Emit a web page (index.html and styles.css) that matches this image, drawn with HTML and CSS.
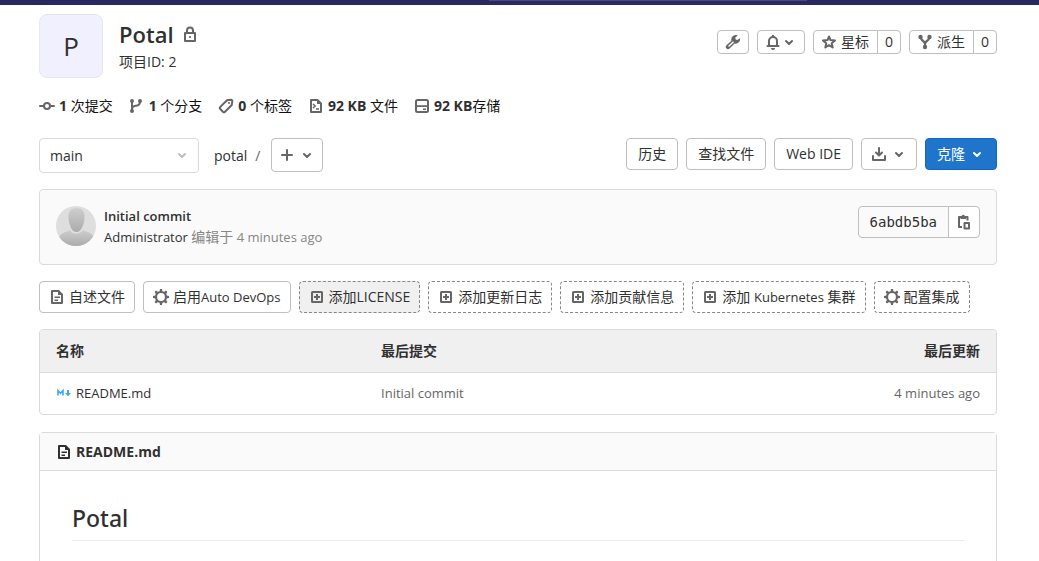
FILE: index.html
```html
<!DOCTYPE html>
<html lang="zh-CN">
<head>
    <meta charset="UTF-8">
    <meta name="viewport" content="width=device-width, initial-scale=1.0">
    <title>Potal</title>
    <link rel="stylesheet" href="styles.css">
</head>
<body>
    <!-- icon sprite -->
    <svg class="sprite" aria-hidden="true">
        <symbol id="lock" viewBox="0 0 16 16"><path d="M5 7V4.500a3 3 0 0 1 6 0V7M3 7h10v8H3z" fill="none" stroke="currentColor" stroke-width="2" stroke-linejoin="round"/><circle cx="8" cy="11" r="1.100"/></symbol>
        <symbol id="commit" viewBox="0 0 16 16"><path d="M1 8h4M11 8h4" stroke="currentColor" stroke-width="2" stroke-linecap="round"/><circle cx="8" cy="8" r="3" fill="none" stroke="currentColor" stroke-width="2"/></symbol>
        <symbol id="branch" viewBox="0 0 16 16"><path d="M3 3v10M3 11c0-2.500 1.500-3 4-3.300S11 6.500 11 4" fill="none" stroke="currentColor" stroke-width="2"/><circle cx="3" cy="3" r="2"/><circle cx="3" cy="13" r="2"/><circle cx="11" cy="3" r="2"/></symbol>
        <symbol id="label" viewBox="0 0 16 16"><path d="M9 2.300l4.200-.5a1 1 0 0 1 1.100 1.100L13.800 7 7 13.700a1.500 1.500 0 0 1-2.100 0L2.300 11a1.500 1.500 0 0 1 0-2.100z" fill="none" stroke="currentColor" stroke-width="2" stroke-linejoin="round"/><circle cx="11" cy="5" r="1"/></symbol>
        <symbol id="code-file" viewBox="0 0 16 16"><path d="M3 2h6.500L13 5.500V14H3z" fill="none" stroke="currentColor" stroke-width="2" stroke-linejoin="round"/><path d="M5 6l2.200 2L5 10" fill="none" stroke="currentColor" stroke-width="1.500"/><path d="M8 10.300h3v1.500H8zM9 2v4h4z"/></symbol>
        <symbol id="disk" viewBox="0 0 16 16"><rect x="2" y="2" width="12" height="12" rx="1.500" fill="none" stroke="currentColor" stroke-width="2"/><path d="M2 7.200h12v1.800H2zM9 10.500h3V12H9z"/></symbol>
        <symbol id="wrench" viewBox="0 0 16 16"><path d="M15 4.200l-2.700 1.900-1.800-.8-.2-1.900L12.900 1.500A4.600 4.600 0 0 0 6.400 6.700L1.500 11.300a2.200 2.200 0 0 0 3.100 3.200L9.600 9.600A4.600 4.600 0 0 0 15 4.200zM4.500 12.600a.7.700 0 1 1-1-1L8 7.200l1 1z" fill-rule="evenodd"/></symbol>
        <symbol id="bell" viewBox="0 0 16 16"><path d="M2.500 12h11M4 12V7a4 4 0 0 1 8 0v5" fill="none" stroke="currentColor" stroke-width="2" stroke-linecap="round"/><path d="M7 1h2v2H7zM6 14h4a2 2 0 0 1-4 0z"/></symbol>
        <symbol id="star" viewBox="0 0 16 16"><path d="M8 2.500l1.500 3.600 4.500.4-3.300 2.800 1 4.200L8 11.200l-3.700 2.300 1-4.200L2 6.500l4.500-.4z" fill="none" stroke="currentColor" stroke-width="2" stroke-linejoin="round"/></symbol>
        <symbol id="fork" viewBox="0 0 16 16"><path d="M4 3v1c0 3 4 2.500 4 6 0-3.500 4-3 4-6V3M8 8v5" fill="none" stroke="currentColor" stroke-width="2.200"/><circle cx="3.500" cy="3" r="2.200"/><circle cx="12.500" cy="3" r="2.200"/><circle cx="8" cy="13" r="2.200"/></symbol>
        <symbol id="chevron" viewBox="0 0 16 16"><path d="M5 7l3 3 3-3" fill="none" stroke="currentColor" stroke-width="2" stroke-linecap="round" stroke-linejoin="round"/></symbol>
        <symbol id="plus" viewBox="0 0 16 16"><path d="M8 3v10M3 8h10" stroke="currentColor" stroke-width="2" stroke-linecap="round"/></symbol>
        <symbol id="download" viewBox="0 0 16 16"><path d="M8 2v7M5 6.500l3 3 3-3M2 10v4h12v-4" fill="none" stroke="currentColor" stroke-width="2" stroke-linecap="round" stroke-linejoin="round"/></symbol>
        <symbol id="copy" viewBox="0 0 16 16"><path d="M6 13H3V3h8.500v3.500" fill="none" stroke="currentColor" stroke-width="2" stroke-linejoin="round"/><path d="M4.500 5V2h1.200a1.600 1.600 0 0 1 3.100 0H10v3z"/><rect x="8.500" y="9" width="4.500" height="5.500" fill="none" stroke="currentColor" stroke-width="2" stroke-linejoin="round"/></symbol>
        <symbol id="doc" viewBox="0 0 16 16"><path d="M3 2h6.500L13 5.500V14H3z" fill="none" stroke="currentColor" stroke-width="2" stroke-linejoin="round"/><path d="M5.500 7.500H11V9H5.500zM5.500 10.500H9V12H5.500zM9 2v4h4z"/></symbol>
        <symbol id="gear" viewBox="0 0 16 16"><circle cx="8" cy="8" r="5" fill="none" stroke="currentColor" stroke-width="2.200"/><path d="M6.500 3L7 0h2l.5 3zM6.500 13l.5 3h2l.5-3zM3 6.500L0 7v2l3 .5zM13 6.500l3 .5v2l-3 .5zM3.200 5.400L1.600 3l1.400-1.400 2.400 1.600zM12.800 5.400L14.400 3 13 1.600l-2.400 1.600zM3.200 10.600L1.600 13 3 14.400l2.400-1.600zM12.800 10.600l1.600 2.400-1.400 1.400-2.400-1.600z"/></symbol>
        <symbol id="plus-square" viewBox="0 0 16 16"><rect x="3" y="3" width="10" height="10" rx=".5" fill="none" stroke="currentColor" stroke-width="2"/><path d="M7 5h2v2h2v2H9v2H7V9H5V7h2z"/></symbol>
        <symbol id="markdown" viewBox="0 0 16 16"><path d="M2 10.500v-5l2.500 2.800L7 5.500v5" fill="none" stroke="currentColor" stroke-width="1.600"/><path d="M11 5h2v3h2l-3 3.300L9 8h2z"/></symbol>
    </svg>

    <header class="navbar">
        <div class="navbar-search"></div>
    </header>

    <main class="content">
        <section class="project-header">
            <div class="project-avatar">P</div>
            <div class="project-title">
                <h1>Potal <svg class="icon"><use href="#lock"/></svg></h1>
                <p>项目ID: 2</p>
            </div>
            <div class="project-actions">
                <button class="btn btn-small" type="button" aria-label="管理"><svg class="icon"><use href="#wrench"/></svg></button>
                <button class="btn btn-small btn-bell" type="button" aria-label="通知"><svg class="icon"><use href="#bell"/></svg><svg class="icon"><use href="#chevron"/></svg></button>
                <div class="btn-group">
                    <button class="btn btn-small" type="button"><svg class="icon"><use href="#star"/></svg>星标</button>
                    <a class="btn btn-small" href="#">0</a>
                </div>
                <div class="btn-group">
                    <button class="btn btn-small" type="button"><svg class="icon"><use href="#fork"/></svg>派生</button>
                    <a class="btn btn-small" href="#">0</a>
                </div>
            </div>
        </section>

        <nav class="stats">
            <a href="#"><svg class="icon"><use href="#commit"/></svg><span><strong>1</strong> 次提交</span></a>
            <a href="#"><svg class="icon"><use href="#branch"/></svg><span><strong>1</strong> 个分支</span></a>
            <a href="#"><svg class="icon"><use href="#label"/></svg><span><strong>0</strong> 个标签</span></a>
            <a href="#"><svg class="icon"><use href="#code-file"/></svg><span><strong>92 KB</strong> 文件</span></a>
            <a href="#"><svg class="icon"><use href="#disk"/></svg><span><strong>92 KB</strong>存储</span></a>
        </nav>

        <section class="tree-controls">
            <div class="ref-select">
                <select aria-label="分支">
                    <option>main</option>
                </select>
                <svg class="icon"><use href="#chevron"/></svg>
            </div>
            <div class="breadcrumb"><a href="#">potal</a><span>/</span></div>
            <button class="btn btn-add" type="button" aria-label="添加"><svg class="icon"><use href="#plus"/></svg><svg class="icon"><use href="#chevron"/></svg></button>
            <div class="tree-actions">
                <a class="btn" href="#">历史</a>
                <a class="btn" href="#">查找文件</a>
                <a class="btn" href="#">Web IDE</a>
                <button class="btn btn-download" type="button" aria-label="下载"><svg class="icon"><use href="#download"/></svg><svg class="icon"><use href="#chevron"/></svg></button>
                <button class="btn btn-blue" type="button">克隆<svg class="icon"><use href="#chevron"/></svg></button>
            </div>
        </section>

        <section class="last-commit">
            <svg class="user-avatar" viewBox="0 0 40 40" aria-hidden="true">
                <defs>
                    <linearGradient id="person" x1="0" y1="0" x2="0" y2="1"><stop offset="0" stop-color="#cecece"/><stop offset="1" stop-color="#ababab"/></linearGradient>
                    <clipPath id="round"><circle cx="20" cy="20" r="20"/></clipPath>
                </defs>
                <g clip-path="url(#round)">
                    <path d="M0 0h40v40H0z" fill="#dedede"/>
                    <path d="M3 31c2-4 7-5 11-7 2 5 10 5 13 0 4 2 9 3 11 7v9H3z" fill="url(#person)"/>
                    <path d="M20.500 2c6 0 8.500 4 8 10-.4 6-3 14-8 14s-7.600-8-8-14c-.5-6 2-10 8-10z" fill="url(#person)"/>
                </g>
            </svg>
            <div class="commit-info">
                <a class="commit-title" href="#">Initial commit</a>
                <p><a href="#">Administrator</a> <span>编辑于</span> 4 minutes ago</p>
            </div>
            <div class="btn-group commit-sha">
                <span class="btn sha">6abdb5ba</span>
                <button class="btn" type="button" aria-label="复制"><svg class="icon"><use href="#copy"/></svg></button>
            </div>
        </section>

        <nav class="quick-links">
            <a class="btn" href="#"><svg class="icon"><use href="#doc"/></svg>自述文件</a>
            <a class="btn" href="#"><svg class="icon"><use href="#gear"/></svg><span>启用<span class="latin">Auto DevOps</span></span></a>
            <a class="btn btn-dashed active" href="#"><svg class="icon"><use href="#plus-square"/></svg>添加LICENSE</a>
            <a class="btn btn-dashed" href="#"><svg class="icon"><use href="#plus-square"/></svg>添加更新日志</a>
            <a class="btn btn-dashed" href="#"><svg class="icon"><use href="#plus-square"/></svg>添加贡献信息</a>
            <a class="btn btn-dashed" href="#"><svg class="icon"><use href="#plus-square"/></svg><span>添加 <span class="latin">Kubernetes</span> 集群</span></a>
            <a class="btn btn-dashed" href="#"><svg class="icon"><use href="#gear"/></svg>配置集成</a>
        </nav>

        <div class="files">
            <table>
                <thead>
                    <tr><th>名称</th><th>最后提交</th><th>最后更新</th></tr>
                </thead>
                <tbody>
                    <tr>
                        <td><a class="file-name" href="#"><svg class="icon"><use href="#markdown"/></svg>README.md</a></td>
                        <td><a href="#">Initial commit</a></td>
                        <td>4 minutes ago</td>
                    </tr>
                </tbody>
            </table>
        </div>

        <article class="readme">
            <a class="readme-title" href="#"><svg class="icon"><use href="#doc"/></svg>README.md</a>
            <div class="readme-body">
                <h2>Potal</h2>
            </div>
        </article>
    </main>
</body>
</html>
```
FILE: styles.css
```css
* {
    box-sizing: border-box;
}

body {
    margin: 0;
    height: 100vh;
    overflow: hidden;
    background-color: #fff;
    color: #303030;
    font-family: "Open Sans", "Noto Sans CJK SC", sans-serif;
    font-size: 14px;
    line-height: 20px;
}

h1, h2, p {
    margin: 0;
}

a {
    color: inherit;
    text-decoration: none;
}

.sprite {
    display: none;
}

.icon {
    width: 16px;
    height: 16px;
    flex-shrink: 0;
    color: #666;
    fill: currentColor;
}

.latin {
    font-size: 13px;
}

.navbar {
    height: 5px;
    background-color: #292961;
}

.navbar-search {
    width: 318px;
    height: 1px;
    margin-left: 489px;
    background-color: #49497a;
}

.content {
    padding: 9px 42px 0 39px;
}

/* buttons */
.btn {
    display: inline-flex;
    align-items: center;
    justify-content: center;
    gap: 4px;
    height: 32px;
    padding: 0 11px;
    border: 1px solid #bfbfbf;
    border-radius: 4px;
    background-color: #fff;
    color: #303030;
    font: inherit;
    white-space: nowrap;
}

.btn-small {
    height: 24px;
    padding: 0 7px;
}

.btn-bell {
    gap: 0;
}

.btn-download {
    padding: 0 9px;
}

.btn-blue {
    border-color: #1068bf;
    background-color: #1f75cb;
    color: #fff;
}

.btn-blue .icon {
    color: #fff;
}

.btn-dashed {
    border: 1px dashed #868686;
}

.btn-group {
    display: flex;
}

.btn-group .btn:first-child {
    border-top-right-radius: 0;
    border-bottom-right-radius: 0;
}

.btn-group .btn:last-child {
    margin-left: -1px;
    border-top-left-radius: 0;
    border-bottom-left-radius: 0;
}

.btn-group .btn-small:first-child {
    padding-right: 8px;
}

/* project header */
.project-header {
    display: flex;
    gap: 16px;
}

.project-avatar {
    display: flex;
    align-items: center;
    justify-content: center;
    width: 64px;
    height: 64px;
    border: 1px solid #e6e6ee;
    border-radius: 8px;
    background-color: #f1f0ff;
    font-size: 26px;
}

.project-title h1 {
    display: flex;
    align-items: center;
    gap: 8px;
    padding: 4px 0 2px;
    font-size: 22px;
    font-weight: 600;
    line-height: 32px;
}

.project-actions {
    display: flex;
    gap: 8px;
    margin-left: auto;
    padding-top: 16px;
}

/* stats */
.stats {
    display: flex;
    gap: 16px;
    padding: 18px 0 22px;
}

.stats a {
    display: flex;
    align-items: center;
    gap: 4px;
    color: #111;
}

.stats strong {
    color: #303030;
}

/* branch selector and tree buttons */
.tree-controls {
    display: flex;
}

.ref-select {
    position: relative;
    width: 160px;
}

.ref-select select {
    appearance: none;
    width: 100%;
    height: 35px;
    padding: 0 10px;
    border: 1px solid #dbdbdb;
    border-radius: 4px;
    background-color: #fff;
    color: #303030;
    font: inherit;
}

.ref-select .icon {
    position: absolute;
    top: 9px;
    right: 9px;
    color: #bfbfbf;
    pointer-events: none;
}

.breadcrumb {
    display: flex;
    align-items: center;
    gap: 8px;
    padding: 0 11px 0 15px;
}

.breadcrumb span {
    color: #666;
}

.btn-add {
    height: 34px;
    padding: 0 7px;
}

.tree-actions {
    display: flex;
    gap: 8px;
    margin-left: auto;
}

/* last commit */
.last-commit {
    display: flex;
    gap: 8px;
    margin-top: 16px;
    padding: 16px;
    border: 1px solid #dbdbdb;
    border-radius: 4px;
    background-color: #fafafa;
}

.user-avatar {
    width: 40px;
    height: 40px;
}

.commit-info {
    color: #868686;
    font-size: 13px;
    line-height: 21px;
}

.commit-info a {
    color: #303030;
}

.commit-info span {
    font-size: 14px;
    line-height: 1;
}

.commit-info .commit-title {
    font-weight: 600;
}

.commit-sha {
    margin-left: auto;
}

.commit-sha .btn {
    padding: 0 7px;
}

.commit-sha .sha {
    padding: 0 11px;
    background-color: #fafafa;
    font-family: "DejaVu Sans Mono", monospace;
}

/* quick links */
.quick-links {
    display: flex;
    gap: 8px;
    margin: 16px 0;
}

.quick-links .btn {
    padding: 0 9px;
}

.quick-links .active {
    background-color: #f0f0f0;
}

/* file table */
.files {
    border: 1px solid #dbdbdb;
    border-radius: 4px;
    overflow: hidden;
}

.files table {
    width: 100%;
    border-collapse: collapse;
    table-layout: fixed;
}

.files th,
.files td {
    height: 42px;
    padding: 0 16px;
    text-align: left;
}

.files td {
    color: #666;
    font-size: 13px;
}

.files th {
    border-bottom: 1px solid #dbdbdb;
    background-color: #f0f0f0;
    font-weight: 600;
}

.files th:first-child {
    width: 34%;
}

.files th:last-child,
.files td:last-child {
    text-align: right;
}

.file-name {
    display: flex;
    align-items: center;
    gap: 4px;
    color: #303030;
}

.file-name .icon {
    color: #42a5f5;
}

/* readme */
.readme {
    margin-top: 17px;
    border: 1px solid #dbdbdb;
    border-radius: 4px;
}

.readme-title {
    display: flex;
    align-items: center;
    gap: 4px;
    height: 38px;
    padding: 0 16px;
    border-bottom: 1px solid #dbdbdb;
    background-color: #fafafa;
    font-weight: 700;
}

.readme-title .icon {
    color: #303030;
}

.readme-body {
    padding: 32px;
}

.readme-body h2 {
    padding-bottom: 7px;
    border-bottom: 1px solid #eaeaea;
    font-family: "Noto Sans", "Noto Sans CJK SC", sans-serif;
    font-size: 23px;
    font-weight: 500;
    line-height: 30px;
}
```
